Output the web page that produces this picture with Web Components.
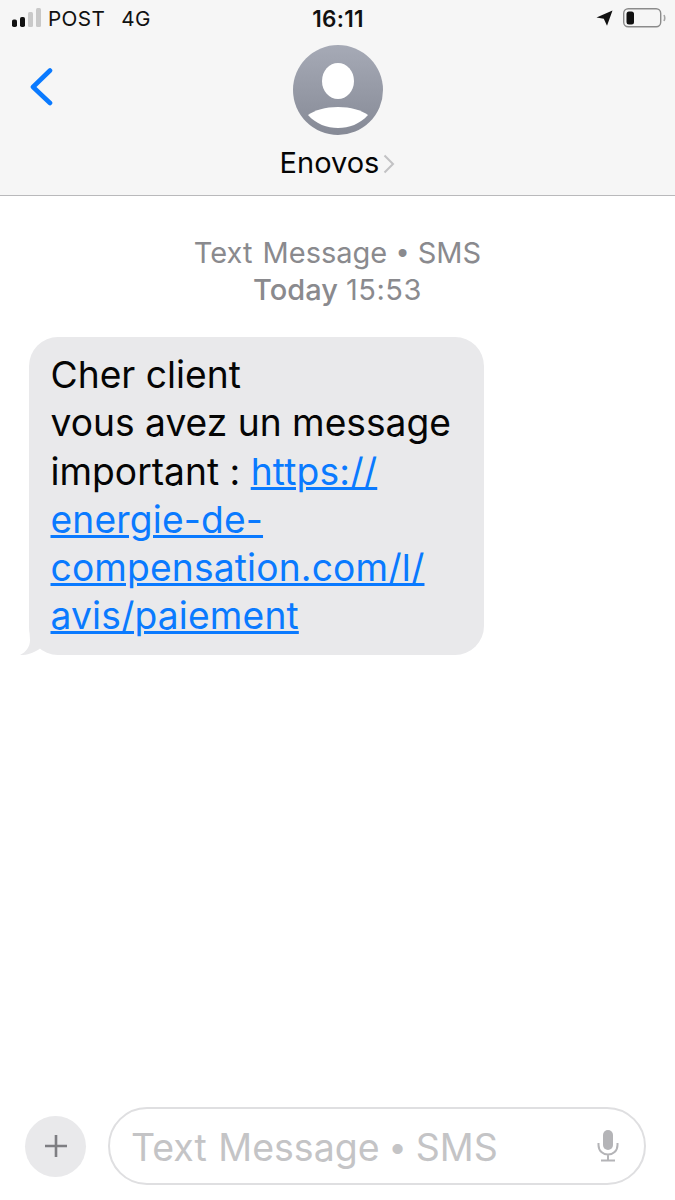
<!DOCTYPE html>
<html lang="en">
<head>
<meta charset="utf-8">
<title>Messages</title>
<style>
  html, body { margin: 0; padding: 0; }
  body {
    width: 675px;
    height: 1200px;
    overflow: hidden;
    background: #fff;
    font-family: Inter, "Liberation Sans", sans-serif;
    display: flex;
    flex-direction: column;
  }
  a-thread { flex: 1; }
  i { font-style: normal; font-family: "Liberation Sans", sans-serif; }
</style>
</head>
<body>
<a-header name="Enovos"></a-header>
<a-thread>
  <a-stamp>
    <span slot="service">Text Message <i>•</i> SMS</span>
    <b slot="day">Today</b>
    <span slot="time">15:53</span>
  </a-stamp>
  <a-bubble>Cher client<br>vous avez un message<br>important : <a href="#">https://<br>energie-de-<br>compensation.com/l/<br>avis/paiement</a></a-bubble>
</a-thread>
<a-composer>Text Message <i>•</i> SMS</a-composer>

<script>
class AHeader extends HTMLElement {
  constructor() {
    super();
    this.attachShadow({ mode: "open" });
  }
  connectedCallback() {
    const name = this.getAttribute("name");
    this.shadowRoot.innerHTML = `<style>
      :host {
        display: block;
        height: 195px;
        background: #f6f6f6;
        border-bottom: 1px solid #b9b9bb;
      }
      .status {
        height: 36px;
        display: grid;
        grid-template-columns: 1fr auto 1fr;
        align-items: center;
        padding: 0 9px 0 11px;
        font-size: 20.700px;
        color: #111;
      }
      .left { display: flex; align-items: center; }
      .left span { margin-left: 6px; letter-spacing: 0.4px; }
      .left span + span { margin-left: 16px; }
      .time { font-weight: 600; font-size: 22.500px; letter-spacing: 0.3px; margin-left: -1px; }
      .right { display: flex; justify-content: flex-end; align-items: center; gap: 10px; }
      .nav {
        position: relative;
        display: flex;
        flex-direction: column;
        align-items: center;
        padding-top: 9px;
      }
      .back { position: absolute; left: 30px; top: 32px; }
      .avatar { display: block; }
      .name {
        display: flex;
        align-items: center;
        margin-top: 10px;
        font-size: 29px;
        line-height: 36px;
        color: #050505;
      }
      .name svg { margin-left: 4px; margin-top: 2px; }
    </style>
    <div class="status">
      <div class="left">
        <svg width="31" height="20" viewBox="0 0 31 20">
          <rect x="1" y="11.500" width="5" height="7.500" rx="1.800" fill="#111"/>
          <rect x="9" y="9" width="5" height="10" rx="1.800" fill="#111"/>
          <rect x="17" y="4" width="5" height="15" rx="1.500" fill="#c9c9c9"/>
          <rect x="25" y="0" width="5" height="19" rx="1.500" fill="#c9c9c9"/>
        </svg>
        <span>POST</span><span>4G</span>
      </div>
      <div class="time">16:11</div>
      <div class="right">
        <svg width="17" height="16" viewBox="0 0 17 16"><path d="M16.500 .5 L.5 7.500 L7.800 8.800 L11 15.800 Z" fill="#111"/></svg>
        <svg width="43" height="20" viewBox="0 0 43 20">
          <rect x=".7" y=".7" width="37" height="18" rx="4.500" fill="none" stroke="#8b8b8b" stroke-width="1.400"/>
          <rect x="3.500" y="3.500" width="7.500" height="13" rx="2.500" fill="#111"/>
          <path d="M41 7 Q42.500 10 41 13" fill="none" stroke="#a5a5a5" stroke-width="1.600"/>
        </svg>
      </div>
    </div>
    <div class="nav">
      <svg class="back" width="24" height="40" viewBox="0 0 24 40">
        <path d="M20 2.500 L3 19 L20 35" fill="none" stroke="#0a7aff" stroke-width="4.600" stroke-linecap="round" stroke-linejoin="round"/>
      </svg>
      <svg class="avatar" width="90" height="90" viewBox="0 0 90 90">
        <defs>
          <linearGradient id="g" x1="0" y1="0" x2="0" y2="1">
            <stop offset="0" stop-color="#a6aab6"/>
            <stop offset="1" stop-color="#868a96"/>
          </linearGradient>
        </defs>
        <circle cx="45" cy="45" r="45" fill="url(#g)"/>
        <ellipse cx="45" cy="36" rx="16" ry="18" fill="#fff"/>
        <path d="M15 70 C22 65 32 62 45 62 C58 62 68 65 75 70 C67 79 56 83 45 83 C34 83 23 79 15 70 Z" fill="#fff"/>
      </svg>
      <div class="name">${name}<svg width="12" height="20" viewBox="0 0 12 20"><path d="M1.500 1.500 L10 10 L1.500 18.500" fill="none" stroke="#c2c2c4" stroke-width="2"/></svg></div>
    </div>`;
  }
}
customElements.define("a-header", AHeader);

class AThread extends HTMLElement {
  constructor() {
    super();
    this.attachShadow({ mode: "open" });
    this.shadowRoot.innerHTML = `<style>
      :host {
        display: flex;
        flex-direction: column;
        padding: 39px 0 0 29px;
      }
    </style><slot></slot>`;
  }
}
customElements.define("a-thread", AThread);

class AStamp extends HTMLElement {
  constructor() {
    super();
    this.attachShadow({ mode: "open" });
    this.shadowRoot.innerHTML = `<style>
      :host {
        display: block;
        margin-left: -29px;
        text-align: center;
        font-size: 29px;
        line-height: 36.500px;
        color: #8a8a8e;
      }
      ::slotted(b) { font-weight: 500; }
      ::slotted([slot=time]) { letter-spacing: 0.5px; }
      ::slotted([slot=service]) { word-spacing: 2px; }
    </style>
    <div><slot name="service"></slot></div>
    <div><slot name="day"></slot> <slot name="time"></slot></div>`;
  }
}
customElements.define("a-stamp", AStamp);

class ABubble extends HTMLElement {
  constructor() {
    super();
    this.attachShadow({ mode: "open" });
    this.shadowRoot.innerHTML = `<style>
      :host {
        display: block;
        position: relative;
        align-self: flex-start;
        box-sizing: border-box;
        width: 455px;
        height: 318px;
        margin-top: 29px;
        padding: 14px 22px 15px 21.500px;
        border-radius: 29px;
        background: #e9e9eb;
        font-size: 37.200px;
        line-height: 48.300px;
        color: #050505;
      }
      ::slotted(a) { color: #0a7aff; letter-spacing: 0.15px; }
      .tail { position: absolute; left: -10px; bottom: 0; }
    </style>
    <svg class="tail" width="34" height="30" viewBox="0 0 34 30"><path d="M10 0 L11 15 C11 22 7 27 1 30 C9 30.500 16 27 21 23.500 L30 10 L30 0 Z" fill="#e9e9eb"/></svg>
    <slot></slot>`;
  }
}
customElements.define("a-bubble", ABubble);

class AComposer extends HTMLElement {
  constructor() {
    super();
    this.attachShadow({ mode: "open" });
    this.shadowRoot.innerHTML = `<style>
      :host {
        display: flex;
        align-items: center;
        gap: 22px;
        padding: 0 29px 15px 25px;
      }
      .plus {
        width: 61px;
        height: 61px;
        flex: none;
        border-radius: 50%;
        background: #e9e9eb;
        display: flex;
        align-items: center;
        justify-content: center;
      }
      .field {
        flex: 1;
        height: 78px;
        box-sizing: border-box;
        border: 2px solid #dfdfe1;
        border-radius: 39px;
        display: flex;
        align-items: center;
        justify-content: space-between;
        padding: 2px 25px 0 21px;
        font-size: 37.500px;
        word-spacing: 1px;
        color: #c4c4c6;
      }
      .mic { margin-top: -2px; }
    </style>
    <div class="plus">
      <svg width="24" height="24" viewBox="0 0 24 24"><path d="M12 1 V23 M1 12 H23" stroke="#7e7e82" stroke-width="2.600" fill="none"/></svg>
    </div>
    <div class="field">
      <span><slot></slot></span>
      <svg class="mic" width="22" height="32" viewBox="0 0 22 32">
        <rect x="6" y="0" width="10" height="20" rx="5" fill="#b4b4b7"/>
        <path d="M1.500 13 V15 C1.500 21 6 24.500 11 24.500 C16 24.500 20.500 21 20.500 15 V13 M11 24.500 V30 M4 30.500 H18" fill="none" stroke="#b4b4b7" stroke-width="2"/>
      </svg>
    </div>`;
  }
}
customElements.define("a-composer", AComposer);
</script>
</body>
</html>
